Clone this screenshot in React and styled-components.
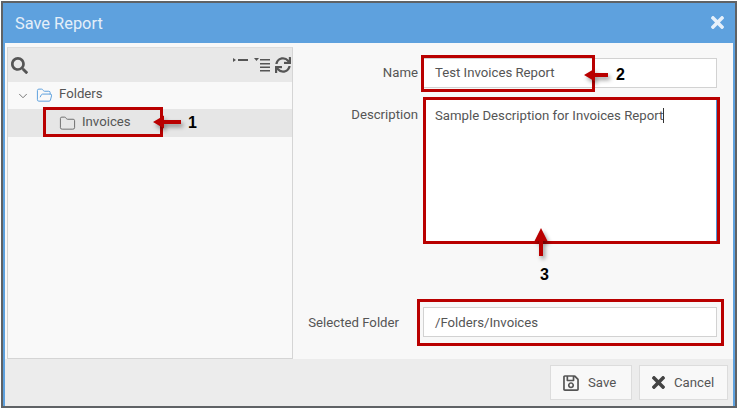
import styled, { createGlobalStyle } from 'styled-components';
import { FaSearch, FaSync, FaTimes, FaRegSave } from 'react-icons/fa';
import { ChevronDown, Folder, FolderOpen } from 'lucide-react';

const GlobalStyle = createGlobalStyle`
	html, body {
		margin: 0;
		padding: 0;
		background: #ffffff;
		font-family: Roboto, "Liberation Sans", sans-serif;
	}
`;

const Screen = styled.div`
	position: relative;
	width: 738px;
	height: 408px;
	overflow: hidden;
	box-sizing: border-box;
	padding: 1px 1px 0 1px;
`;

const Dialog = styled.div`
	display: flex;
	flex-direction: column;
	box-sizing: border-box;
	width: 736px;
	height: 407px;
	border: 2px solid #5f6265;
	background: #5ea1de;
	padding: 0 2px;
`;

const Header = styled.div`
	display: flex;
	align-items: center;
	justify-content: space-between;
	height: 40px;
	flex: none;
	margin: 0 -2px;
	padding: 0 8px 0 12px;
	color: #e4eff9;
	font-size: 16.4px;
	svg {
		color: #e6f0fa;
		font-size: 19px;
		margin-top: -1px;
	}
`;

const Body = styled.div`
	flex: 1;
	display: flex;
	min-height: 0;
	background: #f8f8f8;
	padding: 4px 0 0 2px;
`;

const TreePanel = styled.div`
	width: 286px;
	box-sizing: border-box;
	border: 1px solid #d5d5d5;
	border-top-color: #dddddd;
	background: #f9f9f9;
	flex: none;
	display: flex;
	flex-direction: column;
`;

const TreeToolbar = styled.div`
	display: flex;
	align-items: center;
	justify-content: space-between;
	height: 34px;
	flex: none;
	background: #e8e8e8;
	padding: 0 1px 0 3px;
	color: #555555;
`;

const ToolGroup = styled.div`
	display: flex;
	align-items: center;
	gap: 5px;
`;

const TreeRow = styled.div`
	display: flex;
	align-items: center;
	height: ${(p) => p.$height}px;
	padding-left: ${(p) => p.$indent}px;
	gap: ${(p) => p.$gap}px;
	background: ${(p) => (p.$selected ? '#e6e6e6' : 'transparent')};
	font-size: 13.2px;
	color: #555555;
	svg {
		flex: none;
	}
`;

const TreeLabel = styled.span`
	padding-bottom: 4px;
`;

const Form = styled.div`
	flex: 1;
	display: flex;
	flex-direction: column;
	padding: 11px 16px 0 0;
`;

const Field = styled.div`
	display: flex;
	align-items: flex-start;
	margin-bottom: ${(p) => p.$after}px;
`;

const Label = styled.div`
	width: 130px;
	flex: none;
	text-align: right;
	padding-top: ${(p) => p.$top}px;
	padding-right: ${(p) => p.$right}px;
	box-sizing: border-box;
	font-size: 13.2px;
	line-height: 15px;
	color: #555555;
`;

const Input = styled.div`
	flex: 1;
	box-sizing: border-box;
	height: ${(p) => p.$height}px;
	background: #ffffff;
	border: 1px solid ${(p) => (p.$active ? '#4f93d6' : '#d2d2d2')};
	padding: ${(p) => p.$padTop}px 0 0 11px;
	font-size: 13.2px;
	line-height: 16px;
	color: #555555;
`;

const Caret = styled.span`
	display: inline-block;
	width: 1px;
	height: 15px;
	background: #333333;
	vertical-align: -3px;
`;

const Footer = styled.div`
	display: flex;
	align-items: center;
	justify-content: flex-end;
	gap: 7px;
	height: 47px;
	flex: none;
	background: #ececec;
	padding: 0 5px 0 0;
`;

const Button = styled.div`
	display: flex;
	align-items: center;
	gap: ${(p) => p.$gap}px;
	box-sizing: border-box;
	width: ${(p) => p.$width}px;
	height: 35px;
	padding-left: ${(p) => p.$pad}px;
	background: #f8f8f8;
	border: 1px solid #dcdcdc;
	font-size: 13.2px;
	color: #555555;
	svg {
		color: ${(p) => p.$iconColor};
		flex: none;
	}
`;

const Callout = styled.div`
	position: absolute;
	left: ${(p) => p.$x}px;
	top: ${(p) => p.$y}px;
	width: ${(p) => p.$w}px;
	height: ${(p) => p.$h}px;
	box-sizing: border-box;
	border: 3px solid #b90000;
`;

const Arrow = styled.svg`
	position: absolute;
	left: ${(p) => p.$x}px;
	top: ${(p) => p.$y}px;
	overflow: visible;
	filter: drop-shadow(2px 3px 2px rgba(0, 0, 0, 0.4));
`;

const Number = styled.div`
	position: absolute;
	left: ${(p) => p.$x}px;
	top: ${(p) => p.$y}px;
	font-family: "Liberation Sans", Arial, sans-serif;
	font-weight: 700;
	font-size: 16px;
	line-height: 16px;
	color: #000000;
`;

const CollapseIcon = () => (
	<svg width="16" height="16" viewBox="0 0 16 16">
		<path d="M0 1 L3 3 L0 5 Z" fill="#555" />
		<rect x="5" y="2" width="10" height="2" fill="#555" />
	</svg>
);

const ExpandIcon = () => (
	<svg width="16" height="16" viewBox="0 0 16 16">
		<path d="M0 1 L5 1 L2.5 4 Z" fill="#555" />
		<rect x="6" y="2" width="10" height="1.5" fill="#555" />
		<rect x="6" y="6" width="10" height="1.5" fill="#555" />
		<rect x="6" y="9.5" width="10" height="1.5" fill="#555" />
		<rect x="6" y="13" width="10" height="1.5" fill="#555" />
	</svg>
);

const App = () => (
	<Screen>
		<GlobalStyle />
		<Dialog>
			<Header>
				<span>Save Report</span>
				<FaTimes />
			</Header>
			<Body>
				<TreePanel>
					<TreeToolbar>
						<FaSearch size={17} />
						<ToolGroup>
							<CollapseIcon />
							<ExpandIcon />
							<FaSync size={16} />
						</ToolGroup>
					</TreeToolbar>
					<TreeRow $height={27} $indent={8} $gap={6}>
						<ChevronDown size={14} strokeWidth={1.5} color="#666666" />
						<FolderOpen size={17} strokeWidth={1.4} color="#5ea1de" />
						<TreeLabel>Folders</TreeLabel>
					</TreeRow>
					<TreeRow $height={28} $selected $indent={51} $gap={6}>
						<Folder size={17} strokeWidth={1.3} color="#666666" />
						<TreeLabel>Invoices</TreeLabel>
					</TreeRow>
				</TreePanel>
				<Form>
					<Field $after={10}>
						<Label $top={7} $right={5}>Name</Label>
						<Input $height={30} $padTop={6}>Test Invoices Report</Input>
					</Field>
					<Field $after={65}>
						<Label $top={9} $right={5}>Description</Label>
						<Input $height={144} $active $padTop={9}>
							Sample Description for Invoices Report
							<Caret />
						</Input>
					</Field>
					<Field $after={0}>
						<Label $top={8} $right={24}>Selected Folder</Label>
						<Input $height={30} $padTop={7}>/Folders/Invoices</Input>
					</Field>
				</Form>
			</Body>
			<Footer>
				<Button $width={82} $pad={11} $gap={8} $iconColor="#555555">
					<FaRegSave size={18} />
					Save
				</Button>
				<Button $width={89} $pad={9} $gap={6} $iconColor="#444444">
					<FaTimes size={19} />
					Cancel
				</Button>
			</Footer>
		</Dialog>

		<Callout $x={43} $y={107} $w={120} $h={30} />
		<Callout $x={421} $y={55} $w={174} $h={37} />
		<Callout $x={423} $y={97} $w={297} $h={147} />
		<Callout $x={417} $y={299} $w={307} $h={47} />

		<Arrow $x={153} $y={115} width="29" height="14" viewBox="0 0 29 14">
			<path d="M0 7 L11 0.5 L11 5 L28 5 L28 9 L11 9 L11 13.5 Z" fill="#b90000" />
		</Arrow>
		<Number $x={188} $y={115}>1</Number>

		<Arrow $x={584} $y={68} width="24" height="14" viewBox="0 0 24 14">
			<path d="M0 7 L11 0.5 L11 5 L24 5 L24 9 L11 9 L11 13.5 Z" fill="#b90000" />
		</Arrow>
		<Number $x={616} $y={67}>2</Number>

		<Arrow $x={534} $y={228} width="14" height="29" viewBox="0 0 14 29">
			<path d="M7 0 L13.5 13 L9 13 L9 28 L5 28 L5 13 L0.5 13 Z" fill="#b90000" />
		</Arrow>
		<Number $x={540} $y={267}>3</Number>
	</Screen>
);

export default App;
